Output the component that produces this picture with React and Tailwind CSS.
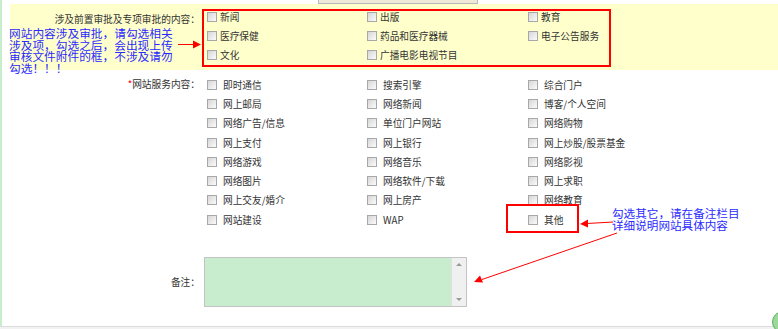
import React from "react";

const approvals = [
  ["新闻", "出版", "教育"],
  ["医疗保健", "药品和医疗器械", "电子公告服务"],
  ["文化", "广播电影电视节目", null],
];

const services = [
  ["即时通信", "搜索引擎", "综合门户"],
  ["网上邮局", "网络新闻", "博客/个人空间"],
  ["网络广告/信息", "单位门户网站", "网络购物"],
  ["网上支付", "网上银行", "网上炒股/股票基金"],
  ["网络游戏", "网络音乐", "网络影视"],
  ["网络图片", "网络软件/下载", "网上求职"],
  ["网上交友/婚介", "网上房产", "网络教育"],
  ["网站建设", "WAP", "其他"],
];

function Box() {
  return (
    <span className="inline-block w-[10px] h-[10px] shrink-0 border border-[#a8a8a8] bg-[linear-gradient(135deg,#d6d6d6,#fbfbfb)]" />
  );
}

function App() {
  return (
    <div className="relative w-[778px] h-[329px] overflow-hidden bg-white flex flex-col text-[9.7px] leading-[12px] text-[#333] font-['Noto_Sans_CJK_SC','Noto_Sans',sans-serif]">
      <div className="flex flex-1">
        <div className="w-[2px] bg-[#c6eecd]" />
        <div className="flex-1 flex flex-col">
          <div className="h-[4px]">
            <div className="ml-[316px] w-[160px] h-full border border-t-0 border-[#b9b9b9] bg-[#efe9d6]" />
          </div>

          <div className="ml-[8px] h-[66px] bg-[#ffffcc] flex">
            <div className="w-[190px] text-right pt-[9px]">涉及前置审批及专项审批的内容：</div>
            <div className="ml-[2px] mt-[5px] w-[409px] h-[58px] border-2 border-[#ff0000] pl-[3px]">
              <div className="grid grid-cols-[160px_161px_80px] gap-y-[7px]">
                {approvals.flat().map((a, i) => (
                  <div key={i} className="h-[12px] flex items-center gap-[3px]">
                    {a && <Box />}
                    {a && <span>{a}</span>}
                  </div>
                ))}
              </div>
            </div>
          </div>

          <div className="flex pt-[5px]">
            <div className="w-[198px] text-right h-[19.3px] leading-[19.3px]">
              <span className="text-[#ff0000]">*</span>网站服务内容：
            </div>
            <div className="grid grid-cols-[160px_161px_161px]">
              {services.flat().map((s, i) => (
                <div key={i} className="h-[19.3px] pl-[7px] flex items-center gap-[6px]">
                  <Box />
                  <span>{s}</span>
                </div>
              ))}
            </div>
          </div>

          <div className="flex items-center mt-[27.6px]">
            <div className="w-[198px] text-right">备注：</div>
            <div className="ml-[4px] w-[263px] h-[50px] border border-[#c4c4c4] bg-[#c8ecce] flex justify-end">
              <div className="w-[15px] h-full bg-[#f0f0f0] border-l border-[#e0e0e0] flex flex-col justify-between items-center py-[5px]">
                <span className="w-0 h-0 border-x-[3px] border-x-transparent border-b-[3px] border-b-[#999]" />
                <span className="w-0 h-0 border-x-[3px] border-x-transparent border-t-[3px] border-t-[#999]" />
              </div>
            </div>
          </div>
        </div>
      </div>
      <div className="h-[3px] border-t border-[#dcdcdc] bg-[#f2f2f2]" />

      <div className="absolute left-[9px] top-[27px] text-[11.7px] leading-[11.7px] text-[#2a2aff] whitespace-nowrap">
        网站内容涉及审批，请勾选相关
        <br />
        涉及项，勾选之后，会出现上传
        <br />
        审核文件附件的框，不涉及请勿
        <br />
        勾选！！！
      </div>

      <div className="absolute left-[506px] top-[204px] w-[73px] h-[29px] border-2 border-[#ff0000]" />

      <div className="absolute left-[612px] top-[208px] text-[11.6px] leading-[11.6px] text-[#2a2aff] whitespace-nowrap">
        勾选其它，请在备注栏目
        <br />
        详细说明网站具体内容
      </div>

      <svg className="absolute inset-0 pointer-events-none" width="778" height="329">
        <line x1="178" y1="44.5" x2="194" y2="44.5" stroke="#ff0000" strokeWidth="1" />
        <polygon points="193,40.5 201,44.5 193,48.5" fill="#ff0000" />
        <line x1="613" y1="222" x2="587" y2="223.5" stroke="#ff0000" strokeWidth="1" />
        <polygon points="588,219.5 580,224 588,227.5" fill="#ff0000" />
        <line x1="617" y1="233" x2="482" y2="279.5" stroke="#ff0000" strokeWidth="1" />
        <polygon points="480,275.5 474,282 483,282.5" fill="#ff0000" />
      </svg>

      <div className="absolute left-[772px] top-[311px] w-[22px] h-[22px] rounded-full border border-[#5bb35b] bg-[#9bd89b]" />
    </div>
  );
}

export default App;
